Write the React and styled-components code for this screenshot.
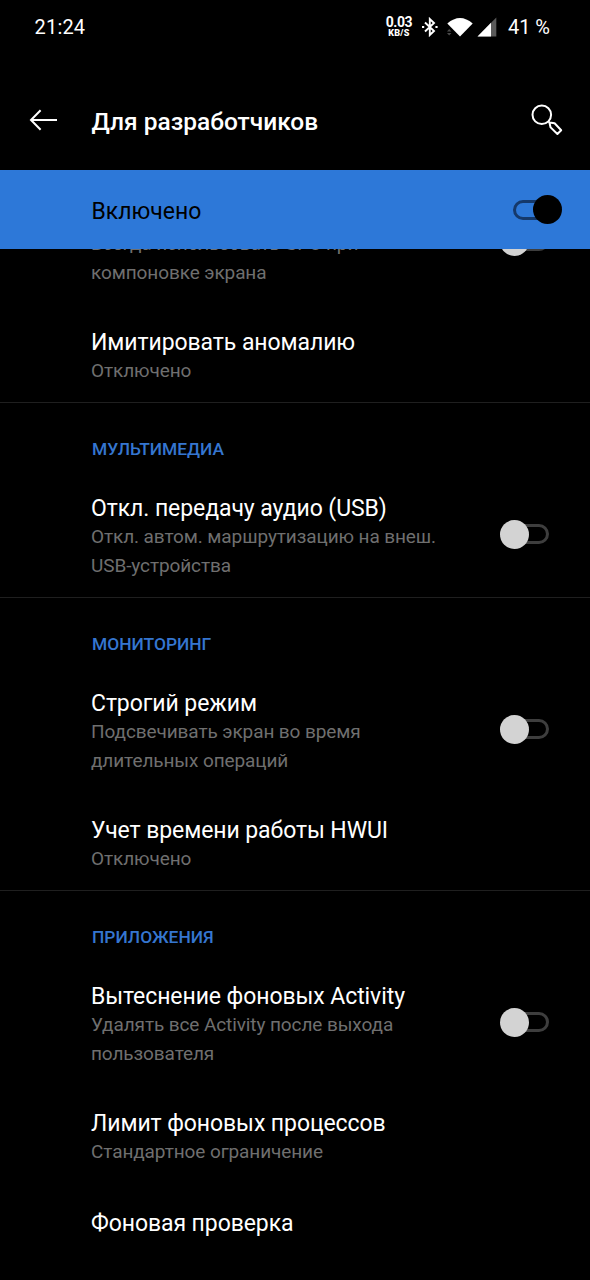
import React, { useState } from "react";
import styled, { createGlobalStyle, css } from "styled-components";

const GlobalStyle = createGlobalStyle`
  *,
  *::before,
  *::after {
    box-sizing: border-box;
  }

  body {
    margin: 0;
    background-color: #000;
    font-family: Roboto, "Noto Sans", sans-serif;
  }
`;

const Screen = styled.div`
  width: 590px;
  height: 1280px;
  display: flex;
  flex-direction: column;
  overflow: hidden;
  background-color: #000;
  color: #fff;
`;

const StatusBar = styled.div`
  flex: none;
  height: 54px;
  padding: 0 40px 0 34.5px;
  display: flex;
  align-items: center;
  justify-content: space-between;
  font-size: 20px;
  line-height: 24px;
`;

const Clock = styled.span`
  letter-spacing: 0.2px;
`;

const StatusIcons = styled.div`
  display: flex;
  align-items: center;

  svg {
    margin-bottom: 1px;
  }
`;

const Speed = styled.div`
  width: 28px;
  margin-right: 8px;
  display: flex;
  flex-direction: column;
  align-items: center;
  font-weight: 700;
  font-size: 14px;
  line-height: 12px;
  letter-spacing: -0.4px;
`;

const SpeedUnit = styled.span`
  font-weight: 900;
  font-size: 9px;
  line-height: 10px;
  letter-spacing: 0.3px;
`;

const Battery = styled.span`
  margin-left: 11px;
  white-space: nowrap;
`;

const Toolbar = styled.header`
  flex: none;
  height: 116px;
  padding: 15px 26px 0 28px;
  display: flex;
  align-items: center;
`;

const IconButton = styled.button`
  display: flex;
  padding: 0;
  border: none;
  background: none;
  color: inherit;
  cursor: pointer;
`;

const PageTitle = styled.h1`
  flex: 1;
  margin: 4px 0 0 32.5px;
  font-size: 24.5px;
  font-weight: 500;
  line-height: 28px;
`;

const MasterBar = styled.div`
  flex: none;
  height: 79px;
  padding: 0 28px 0 91.5px;
  display: flex;
  align-items: center;
  justify-content: space-between;
  background-color: #2d78d8;
  color: #000;
`;

const MasterLabel = styled.span`
  padding-top: 5px;
  font-size: 23px;
  line-height: 28px;
`;

const Track = styled.button`
  flex: none;
  width: 49px;
  height: 29px;
  padding: 0;
  border: none;
  background: none;
  display: grid;
  align-items: center;
  cursor: pointer;

  &::before,
  &::after {
    content: "";
    grid-area: 1 / 1;
  }

  &::before {
    width: 37px;
    height: 20px;
    justify-self: end;
    border: 3px solid #3e3e3e;
    border-radius: 10px;
  }

  &::after {
    width: 29px;
    height: 29px;
    border-radius: 50%;
    background-color: #d3d3d3;
  }

  ${({ $on }) =>
    $on &&
    css`
      &::before {
        justify-self: start;
        border-color: #15396b;
      }

      &::after {
        justify-self: end;
        background-color: #000;
      }
    `}
`;

const List = styled.main`
  flex: 1;
  min-height: 0;
  overflow: hidden;
`;

const Scrolled = styled.div`
  margin-top: -72px;
`;

const Section = styled.section`
  border-bottom: 1px solid #1f1f1f;

  &:last-child {
    border-bottom: none;
  }
`;

const SectionTitle = styled.h2`
  margin: 0;
  height: 67px;
  padding: 35px 0 0 92px;
  color: #3576d0;
  font-size: 17.4px;
  font-weight: 500;
  line-height: 23px;
`;

const Row = styled.div`
  display: flex;
  align-items: center;
  justify-content: space-between;
  padding: ${({ $single }) => ($single ? "27px" : "25.1px")} 41px 16.4px 91px;

  ${Track} {
    margin-bottom: 7px;
  }
`;

const RowTitle = styled.div`
  height: 27px;
  font-size: 23px;
  line-height: 27px;
  letter-spacing: -0.08px;
  white-space: nowrap;
`;

const Summary = styled.div`
  color: #6f6f6f;
  font-size: 19px;
  line-height: 29.3px;
  letter-spacing: -0.1px;
  white-space: pre-line;
`;

const sections = [
  {
    id: "drawing",
    rows: [
      {
        summary: "Всегда использовать GPU при\nкомпоновке экрана",
        toggle: true,
      },
      { title: "Имитировать аномалию", summary: "Отключено" },
    ],
  },
  {
    id: "media",
    title: "МУЛЬТИМЕДИА",
    rows: [
      {
        title: "Откл. передачу аудио (USB)",
        summary: "Откл. автом. маршрутизацию на внеш.\nUSB-устройства",
        toggle: true,
      },
    ],
  },
  {
    id: "monitoring",
    title: "МОНИТОРИНГ",
    rows: [
      {
        title: "Строгий режим",
        summary: "Подсвечивать экран во время\nдлительных операций",
        toggle: true,
      },
      { title: "Учет времени работы HWUI", summary: "Отключено" },
    ],
  },
  {
    id: "apps",
    title: "ПРИЛОЖЕНИЯ",
    rows: [
      {
        title: "Вытеснение фоновых Activity",
        summary: "Удалять все Activity после выхода\nпользователя",
        toggle: true,
      },
      { title: "Лимит фоновых процессов", summary: "Стандартное ограничение" },
      { title: "Фоновая проверка" },
    ],
  },
];

const BackIcon = () => (
  <svg width="31" height="24" viewBox="0 0 31 24" fill="none" stroke="currentColor" strokeWidth="2">
    <path d="M12.6 2.2 3 12l9.6 9.8M3 12h26" />
  </svg>
);

const SearchIcon = () => (
  <svg width="34" height="34" viewBox="0 0 34 34" fill="none" stroke="currentColor" strokeWidth="2">
    <circle cx="11.8" cy="11.8" r="9.3" />
    <path
      d="M18.4 18.4 19.8 19.8M19.4 19.4 24.6 20.2 31.2 27.2 27.4 31 20.6 24.4Z"
      strokeLinejoin="round"
    />
  </svg>
);

const BluetoothIcon = () => (
  <svg width="18" height="20" viewBox="0 0 18 20" fill="none" stroke="#fff" strokeWidth="1.9">
    <path d="M4 5.5 13 14 8.8 18V2L13 6 4 14.5" />
    <path d="M1 10h2.2M14.4 10h2.2" strokeWidth="2.2" />
  </svg>
);

const WifiSvg = styled.svg`
  margin: 0 3px 0 7px;
`;

const WifiIcon = () => (
  <WifiSvg width="28" height="20" viewBox="0 0 28 20">
    <path d="M1.3 6.5Q14 -4.5 26.7 6.5L14 19.5Z" fill="#fff" />
    <path d="M1 14.5 3.2 12 5.4 14.5ZM1 16 3.2 18.5 5.4 16Z" fill="#4a4a4a" />
  </WifiSvg>
);

const SignalIcon = () => (
  <svg width="20" height="20" viewBox="0 0 20 20">
    <path d="M0.5 19.5 19.3 0.5V19.5Z" fill="#5a5a5a" />
    <path d="M0.5 19.5 14 5.8V19.5Z" fill="#fff" />
  </svg>
);

const Switch = ({ initial = false }) => {
  const [on, setOn] = useState(initial);

  return <Track role="switch" aria-checked={on} $on={on} onClick={() => setOn(!on)} />;
};

const App = () => (
  <Screen>
    <GlobalStyle />
    <StatusBar>
      <Clock>21:24</Clock>
      <StatusIcons>
        <Speed>
          0.03
          <SpeedUnit>KB/S</SpeedUnit>
        </Speed>
        <BluetoothIcon />
        <WifiIcon />
        <SignalIcon />
        <Battery>41 %</Battery>
      </StatusIcons>
    </StatusBar>

    <Toolbar>
      <IconButton aria-label="Назад">
        <BackIcon />
      </IconButton>
      <PageTitle>Для разработчиков</PageTitle>
      <IconButton aria-label="Поиск">
        <SearchIcon />
      </IconButton>
    </Toolbar>

    <MasterBar>
      <MasterLabel>Включено</MasterLabel>
      <Switch initial />
    </MasterBar>

    <List>
      <Scrolled>
        {sections.map((section) => (
          <Section key={section.id}>
            {section.title && <SectionTitle>{section.title}</SectionTitle>}
            {section.rows.map((row, i) => (
              <Row key={i} $single={!row.summary}>
                <div>
                  <RowTitle>{row.title}</RowTitle>
                  {row.summary && <Summary>{row.summary}</Summary>}
                </div>
                {row.toggle && <Switch />}
              </Row>
            ))}
          </Section>
        ))}
      </Scrolled>
    </List>
  </Screen>
);

export default App;
